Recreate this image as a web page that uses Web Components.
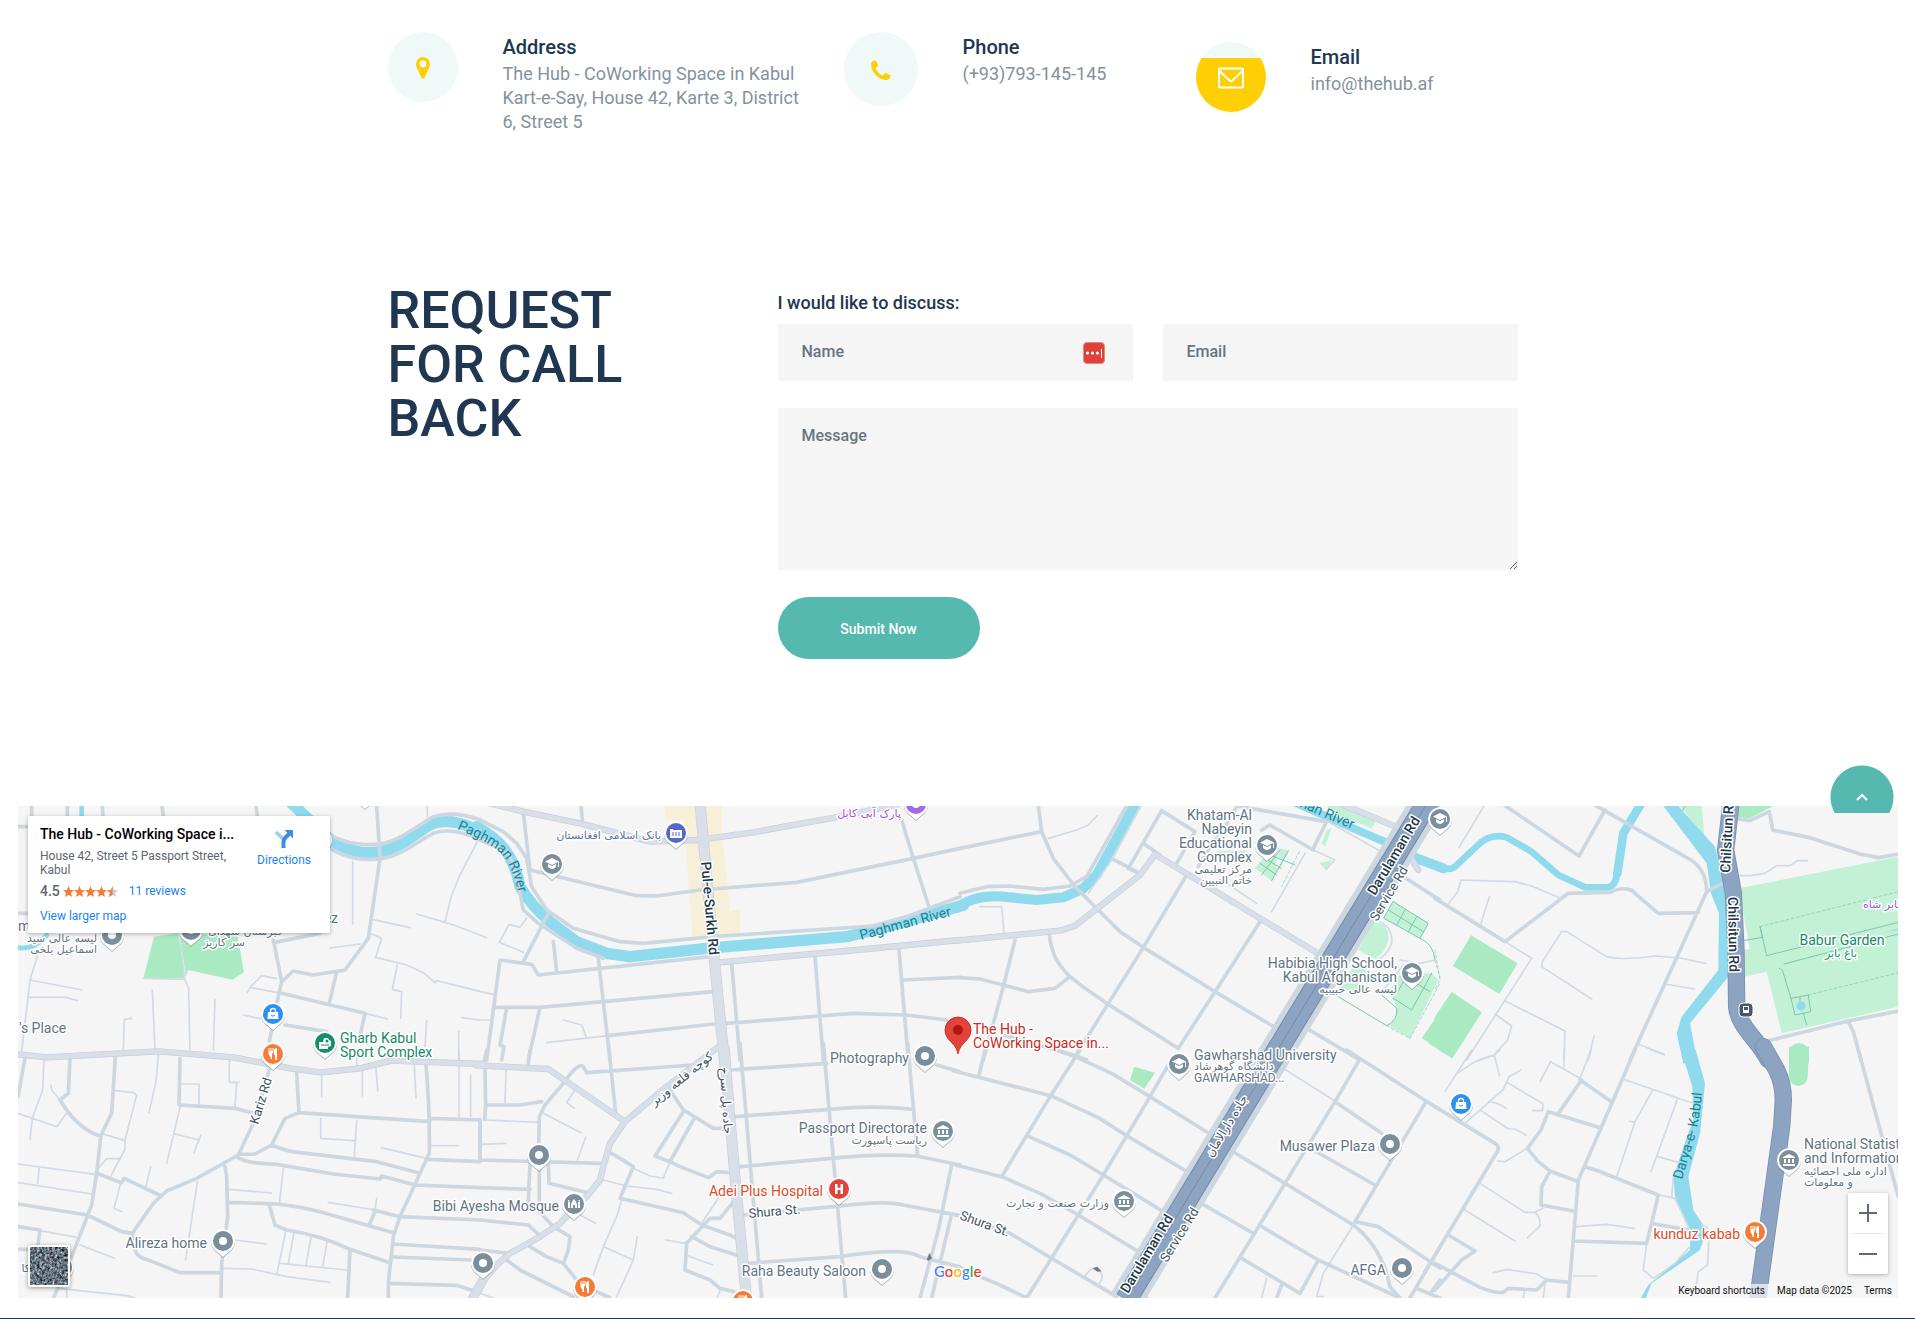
<!DOCTYPE html>
<html lang="en">
<head>
<meta charset="utf-8">
<meta name="viewport" content="width=device-width, initial-scale=1">
<title>Contact - The Hub</title>
<style>
body{margin:0;background:#fff;font-family:Roboto,"DejaVu Sans",sans-serif;color:#203751}
</style>
</head>
<body>
<contact-page></contact-page>
<script>
const define = (name, html, setup) => customElements.define(name, class extends HTMLElement {
  connectedCallback() {
    if (this.shadowRoot) return;
    const t = document.createElement('template');
    t.innerHTML = html;
    this.attachShadow({mode: 'open'}).append(t.content.cloneNode(true));
    if (setup) setup(this, this.shadowRoot);
  }
});

/* One contact detail: round icon, heading, text */
const contactIcons = {
  pin: '<svg width="14" height="22" viewBox="0 0 14 22"><path fill="#ffcf06" fill-rule="evenodd" d="M7 0a7 7 0 0 0-7 7c0 1.700.3 2.700.8 3.700L5.600 21a1.600 1.600 0 0 0 2.800 0l4.800-10.300c.5-1 .8-2 .8-3.700a7 7 0 0 0-7-7zM7 3.600a3.400 3.400 0 1 1 0 6.800 3.400 3.400 0 0 1 0-6.800z"/></svg>',
  phone: '<svg width="20" height="20" viewBox="0 0 20 20"><path fill="#ffcf06" d="M1.200 1.600 3.500.5c.9-.3 1.300 0 1.700.8l1.600 3.500c.3.700.1 1.100-.5 1.600L4.900 7.700c-.4.400-.4.800-.1 1.400 1.300 2.500 3.400 4.700 6.100 6.100.6.300 1 .3 1.400-.1l1.400-1.500c.5-.6.9-.7 1.600-.4l3.500 1.700c.8.400 1 .8.700 1.600-.8 2.300-2.300 3.500-4.600 3.400C7.500 19.600.4 12 .1 4.900 0 3.400.4 2.300 1.200 1.600z"/></svg>',
  mail: '<svg width="26" height="22" viewBox="0 0 26 22" fill="none" stroke="#fff" stroke-width="2"><rect x="1" y="1.500" width="24" height="19" rx="1.500"/><path d="m1.500 4 10.200 9.500q1.300 1.200 2.600 0L24.500 4"/></svg>'
};
define('contact-item', `
<style>
:host{display:flex;align-items:flex-start;gap:45px}
.disc{flex:none;width:70px;height:70px;border-radius:50%;background:#eff9f8;display:grid;place-items:center}
:host([icon=phone]) .disc{width:74px;height:74px}
:host([icon=mail]) .disc{background:linear-gradient(#eff9f8 16px,#ffcf06 16px)}
.disc svg{margin-top:2px}
.text{padding-top:3px}
h3{margin:0 0 3px;font-size:20px;line-height:24px;font-weight:500;color:#203751}
p{margin:0;font-size:18px;line-height:24px;color:#83929d}
</style>
<div class="disc"></div><div class="text"><h3><slot name="title"></slot></h3><p><slot></slot></p></div>`,
(el, root) => { root.querySelector('.disc').innerHTML = contactIcons[el.getAttribute('icon')]; });

define('callback-form', `
<style>
:host{display:block}
form{display:grid;grid-template-columns:1fr 1fr;gap:27px 30px}
.lead{grid-column:1/-1;font-size:18px;line-height:38px;font-weight:500;color:#203751;margin:0 0 -25px}
.field{position:relative;display:flex;min-width:0}
.wide{grid-column:1/-1}
input,textarea{box-sizing:border-box;width:100%;border:0;border-radius:0;background:#f5f5f5;padding:0 24px 2px;font:500 16px/24px Roboto,sans-serif;color:#203751}
input{height:57px}
textarea{height:162px;padding-top:16px;resize:vertical;display:block}
::placeholder{color:#67747e;opacity:1}
.key{position:absolute;right:28px;top:18px}
button{width:202px;height:62px;padding:2px 0 0;border:0;border-radius:31px;background:#56b9af;color:#fff;font:500 14px/24px Roboto,sans-serif}
</style>
<form>
<p class="lead">I would like to discuss:</p>
<div class="field"><input type="text" placeholder="Name" aria-label="Name">
<svg class="key" width="22" height="22" viewBox="0 0 22 22"><rect x=".5" y=".5" width="21" height="21" rx="3.500" fill="#df423b" stroke="#e58b78"/><g fill="#fff"><circle cx="4.500" cy="11" r="1.600"/><circle cx="9.500" cy="11" r="1.600"/><circle cx="14.500" cy="11" r="1.600"/><path d="M18 7h1v9h-1z"/></g></svg></div>
<div class="field"><input type="email" placeholder="Email" aria-label="Email"></div>
<div class="field wide"><textarea placeholder="Message" aria-label="Message"></textarea></div>
<div class="wide"><button type="button">Submit Now</button></div>
</form>`);

/* Place card shown over the map */
define('place-card', `
<style>
:host{display:flex;justify-content:space-between;box-sizing:border-box;width:302px;height:117px;padding:9px 16px 7px 12px;background:#fff;border-radius:2px;box-shadow:0 1px 4px rgba(0,0,0,.3);font-size:12px;line-height:14px;color:#5b6670}
h2{margin:0;font-size:14px;line-height:18px;font-weight:500;color:#000}
p{margin:6px 0 0;width:192px}
a{color:#1a83f5;text-decoration:none}
.rate{display:flex;align-items:center;gap:3px;margin-top:6px;line-height:16px}
b{font-size:14px;font-weight:500}
.rate a{margin-left:8px}
.more{display:block;margin-top:10px}
.dir{margin-top:5px;display:flex;flex-direction:column;align-items:center;gap:5px;align-self:flex-start;margin-right:3px}
</style>
<div><h2>The Hub - CoWorking Space i...</h2><p>House 42, Street 5 Passport Street, Kabul</p>
<div class="rate"><b>4.5</b><svg width="55" height="11" viewBox="0 0 55 11"><defs><path id="s" d="m5.500 0 1.600 3.900 4 .3-3.100 2.600 1 4.200-3.500-2.300L2 11l1-4.200L-.1 4.200l4-.3z"/><clipPath id="h"><path d="M44 0h5.500v11H44z"/></clipPath></defs><g fill="#f57c36"><use href="#s"/><use href="#s" x="11"/><use href="#s" x="22"/><use href="#s" x="33"/></g><use href="#s" x="44" fill="#c5ced5"/><g clip-path="url(#h)"><use href="#s" x="44" fill="#f57c36"/></g></svg><a href="#">11 reviews</a></div>
<a class="more" href="#">View larger map</a></div>
<a class="dir" href="#"><svg width="18" height="18" viewBox="0 0 18 18"><path fill="none" stroke="#a9cbe4" stroke-width="3.500" d="m1 2 6.500 6.500"/><path fill="none" stroke="#3f8ee4" stroke-width="4" d="M8.500 18v-6q0-2.500 2-4.500L14 4"/><path fill="#3f8ee4" d="M9.500 0H18v8.500z"/></svg>Directions</a>`);

/* Map geometry. Each sheet has its own origin and is drawn at three units per pixel. */
const sheets = [
{x:0,y:790,
 water:[[34,'M875,40 L960,120 C1000,165 1060,190 1110,188 C1180,188 1220,150 1280,110 C1320,85 1380,90 1450,130'],[14,'M54,473 C90,478 120,460 140,435'],[14,'M245,48V80']],
 dark:'M462,440 430,566 555,566 535,430ZM540,430 557,560 565,540 697,569 732,547 712,435Z',
 road:'M95,48V80M202,48V80M307,48L309,80M486,48L490,80M768,48L772,80M54,110H84M54,370H84M1130,48 L1140,205 1105,445 1035,540 940,555 880,543 845,575 830,640 808,755M820,450L845,575M820,458L960,430M845,610 1095,670 1080,740M1010,545 988,640M855,705 980,725M1000,140 C1050,165 1100,168 1150,160 C1200,150 1250,110 1300,80 C1350,65 1400,75 1440,90M990,175 C1050,210 1100,212 1150,205 C1210,195 1250,155 1300,130 C1350,112 1400,130 1440,150',
 minor:'M1058,215V402M1440,140 1380,255 1355,315 1335,395M1282,48V80M1115,388 1230,413M1250,372 1355,403 1440,435M990,474 1080,462M1115,432 1145,445 1127,502 1220,525 1270,548 1305,578 1310,572 1440,604M1192,525 1177,598 1205,605 1202,685M742,608 752,590 785,557 830,566M750,592 845,610M1095,670 1162,687M730,675 780,686M1280,692 1275,770M1385,683 1440,690M1376,725V810M113,495 90,570 65,785M90,570 246,600M85,622H198L232,632M395,685 373,688 370,780M457,600 465,780M645,628 640,780M540,440 553,565 566,595 570,790M432,565 553,568'},
{x:480,y:790,
 beige:'M555,48H725V120L750,360H780V432L637,440 612,90H555Z',
 water:[[34,'M-10,110 C60,150 100,190 120,290 C150,340 180,370 210,395 L290,455 380,490 450,500 680,475 1100,440 1200,415 1450,346']],
 road:'M0,90 70,125 110,160 140,205 155,290 200,360 280,415 420,455 490,460 700,440 1180,408 1280,380 1440,320M0,150 60,175 90,200 110,260 130,360 175,400 290,475 370,505M205,370 130,515M130,70 150,240 470,317 530,318 660,300 950,277 1300,205 1440,175M1265,90 1300,205 1345,345M303,48 307,90M60,510 155,523 175,555 690,500M60,510 20,810M45,652H180L700,605M355,505 390,810M220,455 230,545M180,652 145,810M80,655 60,765 72,770 65,810M385,737 700,702M740,700 1120,670 1280,675 1400,690M755,520 780,810M1005,500 1030,810M1257,480 1285,810M1270,570 1440,562',
 minor:'M140,385 120,412 87,403 58,457 130,487M0,435 20,443M0,604 40,613M0,690H30M250,690 305,705 318,740M200,758 385,737',
 art:'M30,40 130,65 300,100 510,155 650,150 690,145 820,127 1050,85 1250,45M720,517 1130,480 1440,450',
 main:'M660,40 700,480 735,830'},
{x:960,y:760,
 light:'M925,275 885,325 935,362 970,300ZM960,265 985,272 960,330 945,320ZM1100,138H1150L1250,180 1235,205 1120,160ZM1300,425 1405,490 1380,535 1272,475ZM1240,487 Q1290,490 1285,540 Q1275,580 1245,598 L1195,570ZM1290,690 1320,640 1415,640 1435,660 1350,835 1285,795 Q1315,780 1310,745ZM1135,680 1190,610 1230,640 1190,700ZM1100,210 1115,205 1095,260 1085,250ZM1078,310 1115,300 1100,333ZM770,272H860V285H770Z',
 dark:'M1440,755 1385,835 1440,868Z',
 line:'M900,310 950,345M915,295 963,325M960,270 905,345M985,272 935,362M930,285 1005,315M1300,425 1405,490 1380,535 1272,475ZM1335,450 1310,495M1370,470 1345,515M1285,450 1390,515M1380,535 Q1420,550 1425,600M1135,710 1280,797 Q1315,780 1310,745 L1265,705M1320,640 1410,695M1415,640 1355,750 1300,715M1345,640 1310,700',
 dash:'M1350,835 1440,670M1425,600 1440,650M1280,797 1350,835M1018,275 965,380',
 water:[[30,'M-10,444 C40,405 100,405 150,412 L230,420 310,412 370,385 410,345 530,125'],[24,'M1010,130 1180,205 1285,250'],[30,'M1365,293 1450,325']],
 road:'M235,138 245,215 280,295 345,380 415,450 480,515 550,562 765,695 950,805M1040,805 1200,900M0,265 245,215M0,400 80,380 150,378 250,388 330,378 380,350 500,138M605,152 505,325 530,337M460,298 530,335M605,152 705,215 650,310M550,250 600,285M680,345 550,562 345,890M900,485 765,695 655,865 440,730 375,685 330,650 C290,610 275,580 268,525M165,540 130,680 70,900M0,653 60,657 205,695 285,685 330,650M130,825 340,885 380,900M830,138 1100,185 1060,265M905,210 930,195 1060,270M1330,350 1440,420M830,140 790,210 750,260 715,320',
 minor:'M265,235 350,210 385,195 412,166M543,138 455,300 385,400M60,440H125L132,520M1035,280 935,455M1105,185 1255,270M800,370 890,430M1060,270 1125,300 1100,325M1250,480 Q1300,500 1295,550 Q1280,590 1250,600M1320,600 1380,610 1425,600M1270,690 1330,615',
 art:'M-10,542 300,512 345,497 540,345 585,283 900,475 1090,590M1150,135 1320,205M1350,290 1375,330'},
{x:1435,y:750,
 light:'M735,168H800L808,258ZM912,415 1390,320V770L1040,850 995,665 930,680 925,600 945,597 925,490Z',
 dark:'M910,168H1015L945,205 905,200ZM108,556 248,640 193,732 54,648ZM50,725 141,787 52,925 -20,880 0,800ZM1062,940V905a30,25 0 0 1 60,0V940Z',
 line:'M725,170 740,185 750,170M975,530 995,617 1390,517M925,572 983,562 975,530M1047,642 1390,552M1033,655 1042,660 1068,745 1120,735 1127,785 1080,795 1068,745M1105,790 1115,825M1095,740V755',
 dash:'M975,530 1390,425M1120,735 1390,668M0,600 15,690 0,720',
 water:[[20,'M-10,340 Q35,367 60,350 L140,275 Q175,250 215,262 L290,305 370,375 450,412H520Q545,405 545,370'],[26,'M547,370 565,250 620,158']],
 waterFill:'M685,168H730L840,290 875,420 880,680 765,820 788,940H745L725,850 740,800 850,660 852,490 828,430 815,340ZM1084,768a14,14 0 1 0 28,0a14,14 0 1 0-28,0ZM1335,550 1390,535V539Z',
 road:'M0,445 210,575 400,430 525,427 C560,410 590,415 600,430 L670,490 790,488M200,160 432,318 510,180M470,160 750,320 Q815,350 815,425 L905,378M815,425 585,930M900,205 945,212 1003,185 1013,240 1120,262 1275,312 1330,323 1390,312M1000,872 1230,815 1390,783M1240,815 1255,845 1278,930',
 minor:'M147,168 72,292M40,462 68,425 78,390 240,395 290,408 370,442M163,440 138,520M210,575 290,625 95,930M210,753 390,843 387,930M180,792 230,828 218,870 177,915 130,930M470,747 320,650 322,635 380,545 395,545 515,620 Q560,632 660,618 L735,624 812,640M690,702 778,717M610,883 688,913M477,858 460,930M900,377H945L990,370 1025,347H1065L1087,332H1117',
 high:'M889,150 872,300 895,430 903,600 905,770 C910,830 970,870 1000,930'},
{x:0,y:1050,
 road:'M75,25 54,140M210,25 205,130 180,150 Q230,235 300,258M346,20 335,190 303,255 290,370 275,465 215,620 160,744M290,370 365,398 372,385 478,435M54,462 262,495 365,545 397,550 460,460 500,423 590,385 715,315 760,220 808,60M397,550 405,600 Q415,625 440,628 L540,668H660M675,350 680,380 683,500 665,640 663,744M540,25 537,165 705,175 760,190M54,530 120,540 112,600M54,598H84M890,70 897,188 855,205 815,285 765,312 725,313M897,188 1290,215M1278,45 Q1290,180 1288,310 L1200,500 1180,560 1165,700V744M1290,205 1440,210M815,285 Q860,305 900,308 L1130,335 1255,368M710,320 Q730,340 830,343 L1000,372 1140,387 1145,378 1245,405 1440,413M1285,328 1440,335V210M685,457 835,462 Q900,470 960,485 L1180,548M808,465 825,525 860,540 Q960,555 1050,598 L1165,637M1050,598 1043,744M1120,480 1200,500 1440,510M1125,485 1110,520M1180,582 1440,598M1180,621 1415,630M1170,700 1370,706 1420,722',
 minor:'M132,25 128,120 97,205 90,268M54,190 170,230 200,190M153,105 155,120 180,150M348,122 400,128 410,135 375,270V298L333,377M303,250 375,272M290,360 320,326H357M54,342 285,373M118,350 113,400M54,398 275,432M475,15 468,95 447,188M545,102H597V165M540,172 500,340M525,252 597,270 603,255M597,270 582,308M688,30V97H717M710,97 705,172M965,75V140M1087,62V138M1128,55 1133,123M1243,45 1248,145M1377,0V200M1412,75V200M962,205V265L1063,272M1070,212 1063,320M1143,293 1280,325M1295,287H1375M850,355 838,460M685,418 815,429M592,395 557,630M452,350 438,408M362,400 342,475 365,485M120,542 230,562M240,585 343,625M985,457 1125,480 1130,445M705,570 800,582M858,540 830,675M882,548 865,640M934,556 918,645M982,572 968,650M840,640 1040,660M668,655 755,657 860,680 990,697M175,715 380,737 405,744M200,722V744M1070,20V45',
 art:'M44,12 140,22 475,4 700,22 870,55 965,67 1080,55 1175,32 1450,42M1450,680 1410,750'},
{x:480,y:1050,
 road:'M20,0 10,45M15,60 17,165 120,165 185,155M150,0 145,40M17,165 14,208M250,100 Q295,35 310,50 L320,68 640,45M250,100 195,165 178,200 176,300M0,208V330M385,-20 407,190M570,120 610,180 700,235H745M610,185 525,318 570,335 640,210M570,335 600,350 685,383 710,365 745,368M395,310 460,350 420,445 610,488 665,525 750,555 770,565M765,450 720,505H690L620,580 615,660 690,690 720,715 780,730M635,560 690,590 770,615M0,330 360,340M205,340 207,400 330,430M150,340 145,455M178,360V455M0,413 150,418M0,510 145,525 185,562M160,465 220,530 270,560 265,600 250,640 290,690M150,590 200,620 250,640M0,600 85,610M80,630 120,660 280,740M340,720 390,744M750,60 1040,40M765,200 1050,178 Q1180,165 1300,178M780,350 1055,325 Q1200,310 1310,318 L1440,345M790,495 1060,470 Q1220,450 1270,465 L1440,497M800,640 1080,620 Q1270,590 1320,620 L1440,650M780,-20 845,744M1030,-20 1060,325 1097,744M1283,-20 1313,318M1415,345 1375,540 1320,744M1413,500 1355,744M1370,45 1440,65',
 minor:'M78,60 75,160M17,210 175,217M5,283 78,280M190,190 303,248M317,262 292,330M285,120 260,158 283,175M460,355 510,378 550,384 570,335M370,390 440,408 530,418 575,430M425,450 410,500 370,590 340,675M370,590 460,630 410,740M472,560 460,630M300,495 347,520M557,570 615,580M625,618 697,644M715,445 665,520M720,720 712,744M0,730 40,744',
 art:'M-10,46 205,57 435,215M735,-25 560,110 435,215 390,280 370,350 360,390 320,440 240,520 180,560 90,610 50,645 20,680 -20,750',
 main:'M733,-5 745,150 765,380 800,754',
 arrow:'M1340,630 1348,608 1356,625 1346,632Z'},
{x:960,y:1050,
 dark:'M523,50 585,68 553,116 510,90Z',
 road:'M-20,62 272,137 415,203 500,257 685,367M75,0 57,75M290,0 345,20 455,70 570,140 755,255M360,0 272,137 125,380M625,45 570,140 430,375 200,744M200,257 330,315 430,375 610,485M-10,346 125,380 240,430 355,495 535,605M-10,495 150,550 275,625 470,740M-10,648 60,680 120,705 200,744M810,300 975,400 1180,525 Q1265,590 1290,710 L1320,744M1160,0 1440,180M1195,35 1125,155 975,400 765,744M1125,155 1265,250M1060,300 1245,405M1395,160 1185,515 1255,530 1440,655M715,455 880,550M905,530 1075,630 1320,744M845,625 1020,730 1075,630M965,705 950,744M1440,590 1350,744M1370,715 1440,744M1415,725 1440,690M545,738 560,744',
 minor:'M970,55 1120,150M1180,525 1090,670 1070,740H1090M920,685 905,744M375,680 Q390,650 415,655M420,665 Q435,680 415,705',
 arrow:'M398,655 412,650 425,664 412,665Z'},
{x:1435,y:1050,
 dark:'M1062,-10V80a28,28 0 0 0 56,0L1122,-10ZM10,0 68,-10 52,25Z',
 waterFill:'M738,0H782L810,100 795,250 760,380 775,480 815,540 795,600 650,700 630,750H614L640,705 765,600 765,540 720,440 715,380 760,250 775,210 772,110Z',
 road:'M0,170 180,280Q195,290 188,303L-30,665M0,640 135,712 Q180,730 205,727 L220,715 305,720 335,690 400,697M40,555 120,603 80,630 0,720M600,0 430,390 400,744M440,90 370,190M435,90 530,155M340,185 495,233M340,185 318,240 277,295 310,335 345,363 430,395M345,363 320,410 318,465 415,483M450,350 490,363 670,435 635,580 415,573M650,520 760,540M1270,0 1390,440',
 minor:'M110,0 30,125M70,68 120,35 178,15 193,77M178,15 195,0M387,0V50M315,95 347,35 435,85 468,0M258,60 222,80 205,118 90,220M218,98 325,162 322,182H293M160,155Q190,158 213,175M138,182 220,237H240L273,256M187,333 210,335 277,295M135,400 270,487H300Q320,505 313,530L278,563M323,475 300,487M90,480 240,573M565,88 770,158M653,120 600,215 545,380M727,148 648,365M583,213 600,218M668,320 730,337M425,530 515,523 598,535M635,580 625,660 655,685 720,640 765,590M672,435 720,445 765,540M715,380 710,440M800,525 Q825,530 822,560 L818,645 790,665 784,705M415,678H485M175,668 218,658 305,672 335,690M648,0 688,14M265,744 268,725M330,700 325,744',
 high:'M985,-10 1025,60 Q1045,100 1045,150 L1040,230 968,750'}
];

const glyphs = {
  dot: '<circle r="4"/>',
  grad: '<path d="m0-6 7 3.500L0 1-7-2.500zM-4 0v3q4 4 8 0V0L0 2zM6-2h1v5H6z"/>',
  bank: '<path d="M-6-3 0-6l6 3v1H-6zM-5-1h2v4h-2zM-1-1h2v4h-2zM3-1h2v4H3zM-6 4H6v2H-6z"/>',
  money: '<path d="M-6-4h3v1h9v8H-6z"/><path d="M-3-1v4M0-1v4M3-1v4" stroke="#5668cc"/>',
  food: '<path d="M-4.500-6h1v3h1v-3h1v3h1v-3h1v4l-1.500 2v5h-1.500V3L-4.500 0zM2 6V1H1v-4q0-3 3-3V6z"/>',
  bag: '<path d="M-5-2H5L5.500 5h-11z"/><path d="M-2.500-1v-2q0-2.500 2.500-2.500T2.500-3v2" fill="none" stroke="#fff" stroke-width="1.300"/><path d="M-2 1q2 2.500 4 0" fill="none" stroke="#2a90f2"/>',
  h: '<path d="M-4-5h2.500v3.800h3V-5H4V5H1.500V1h-3v4H-4z"/>',
  mosque: '<path d="M-6-2h2v6h-2zM4-2h2v6H4zM-3 0q1-3 3-5 2 2 3 5v4H1V1h-2v3h-2zM-6-4h1.500v1.500H-6zM4.500-4H6v1.500H4.500z"/>',
  sport: '<path d="M-6-1h4l1-4h4l1 2 2 1v5l-3 1v2h-9z"/><circle cx="2" cy="-2" r="1.500" fill="#149068"/><path d="M-4 2H4" stroke="#149068"/>',
  star: '<circle r="4"/>'
};
const G = '#7a8e9b';
const pins = [
 [676,833,'money','#5668cc'],[552,864,'grad',G],[916,804,'star','#a566ee'],[925,1056,'dot',G],
 [1267,845,'grad',G],[1440,819,'grad',G],[1412,973,'grad',G],[1179,1064,'grad',G],
 [1390,1144,'dot',G],[1402,1268,'dot',G],[1124,1201,'bank',G],[943,1131,'bank',G],
 [839,1189,'h','#e2443c'],[882,1269,'dot',G],[539,1155,'dot',G],[574,1204,'mosque',G],
 [483,1263,'dot',G],[585,1287,'food','#f57c36'],[743,1301,'food','#f57c36'],[223,1241,'dot',G],
 [62,1267,'dot',G],[273,1054,'food','#f57c36'],[273,1014,'bag','#2a90f2'],
 [325,1043,'sport','#149068'],[112,935,'dot',G],[191,930,'dot',G],[320,840,'dot',G],[365,793,'dot',G],
 [1461,1104,'bag','#2a90f2'],[1789,1160,'bank',G],[1755,1232,'food','#f57c36']
];
/* text, x, y, anchor (l, m, r), class, rotation */
const labels = [
 ['Khatam-Al',1252,820,'r'],['Nabeyin',1252,834,'r'],['Educational',1252,848,'r'],['Complex',1252,862,'r'],
 ['مرکز تعلیمی',1252,873,'r','fa'],['خاتم النبیین',1252,884,'r','fa'],
 ['Habibia High School,',1397,968,'r'],['Kabul Afghanistan',1397,982,'r'],['لیسه عالی حبیبیه',1397,993,'r','fa'],
 ['Gawharshad University',1194,1060,'l'],['دانشگاه گوهرشاد',1194,1070,'l','fa'],['GAWHARSHAD...',1194,1082,'l','sm'],
 ['Musawer Plaza',1375,1151,'r'],['AFGA',1386,1275,'r'],['وزارت صنعت و تجارت',1109,1207,'r','fa'],
 ['Photography',909,1063,'r'],['Passport Directorate',927,1133,'r'],['ریاست پاسپورت',927,1144,'r','fa'],
 ['Adei Plus Hospital',823,1196,'r','hot'],['Raha Beauty Saloon',866,1276,'r'],
 ['Bibi Ayesha Mosque',559,1211,'r'],['Alireza home',207,1248,'r'],['کا',30,1272,'r','fa'],
 ['Gharb Kabul',340,1043,'l','grn'],['Sport Complex',340,1057,'l','grn'],
 ["'s Place",19,1033,'l'],['m',18,931,'l'],['ez',338,923,'r'],
 ['لیسه عالی سید',97,942,'r','fa'],['اسماعیل بلخی',97,953,'r','fa'],['قبرستان شهدای',282,935,'r','fa'],['سر کاریز',245,946,'r','fa'],
 ['بانک اسلامی افغانستان',661,839,'r','fa slate'],['پارک آبی کابل',901,817,'r','fa pur'],
 ['Babur Garden',1842,945,'m','grn'],['باغ بابر',1841,957,'m','fa grn'],['بابر شاه',1863,908,'l','fa pur'],
 ['National Statistics',1804,1149,'l'],['and Information',1804,1163,'l'],['اداره ملی احصائیه',1804,1175,'l','fa'],['و معلومات',1804,1186,'l','fa'],
 ['kunduz kabab',1740,1239,'r','hot'],
 ['The Hub -',973,1034,'l','red'],['CoWorking Space in...',973,1048,'l','red'],
 ['Shura St.',749,1218,'l','st',-5],['Shura St.',959,1219,'l','st',20],
 ['Pul-e-Surkh Rd',701,862,'l','hw',85],['Kariz Rd',258,1125,'l','st',-73],
 ['Darulaman Rd',1375,896,'l','hw',-59],['Service Rd',1377,922,'l','st',-59],
 ['Darulaman Rd',1128,1294,'l','hw',-59],['Service Rd',1167,1263,'l','st',-58],
 ['Chilsitun Rd',1730,873,'l','hw',-87],['Chilsitun Rd',1728,897,'l','hw',89],
 ['جاده دارالامان',1230,1128,'m','fb',-59],['کوچه قلعه وزیر',684,1082,'m','fb',-39],['جاده پل سرخ',722,1101,'m','fb',86],
 ['Paghman River',861,940,'l','riv',-15],['Paghman River',1352,829,'r','riv',23]
];

define('area-map', `
<style>
:host{display:block;position:relative;height:492px;background:#f5f5f5}
.canvas{display:block;width:100%;height:100%}
place-card{position:absolute;left:10px;top:10px}
.sat{position:absolute;left:10px;bottom:11px;box-sizing:border-box;width:42px;height:42px;padding:0;border:2px solid #fff;border-radius:2px;overflow:hidden;background:#68777f;box-shadow:0 1px 4px rgba(0,0,0,.4)}
.sat svg{display:block}
.zoom{position:absolute;right:10px;bottom:24px;width:40px;background:#fff;border-radius:2px;box-shadow:0 1px 4px rgba(0,0,0,.3)}
.zoom button{display:grid;place-items:center;width:100%;height:40px;border:0;padding:0;background:none}
.zoom hr{margin:0 5px;border:0;height:1px;background:#e3e5e7}
.legal{position:absolute;right:0;bottom:0;display:flex;gap:12px;padding:0 6px;line-height:14px;font-size:10px;color:#111;background:rgba(245,245,245,.75)}
.legal a,.legal button{color:inherit;text-decoration:none;border:0;background:none;padding:0;font:inherit}
text{font:14px Roboto,"DejaVu Sans",sans-serif;fill:#5f7484;stroke:#fff;stroke-width:3px;stroke-linejoin:round;paint-order:stroke}
.sm{font-size:12px}.fa{font:11px "DejaVu Sans",sans-serif}.fb{font:12px "DejaVu Sans",sans-serif;fill:#40535f}
.grn{fill:#188a68}.red{fill:#c82a22}.hot{fill:#df4a28}.pur{fill:#9a55e0}.slate{fill:#60779c}
.st{fill:#3f5564;font-size:13px}.hw{fill:#22384a;font-weight:500}.riv{fill:#1c8192;stroke:none}
.goog{font:600 15px Lato,sans-serif;stroke-width:3px}
</style>
<svg class="canvas" viewBox="18 806 1880 492" preserveAspectRatio="xMinYMin slice" role="img" aria-label="Map"></svg>
<place-card></place-card>
<button class="sat" type="button" aria-label="Show satellite imagery"><svg width="38" height="38"><filter id="n" x="0" y="0" width="1" height="1" color-interpolation-filters="sRGB"><feTurbulence type="fractalNoise" baseFrequency=".4" numOctaves="3" seed="4"/><feColorMatrix values="1.300 .3 0 0 -.4  1 .6 0 0 -.35  .9 .7 0 0 -.31  0 0 0 0 1"/></filter><rect width="38" height="38" filter="url(#n)"/></svg></button>
<div class="zoom"><button type="button" aria-label="Zoom in"><svg width="18" height="18" stroke="#5d6b76" stroke-width="2"><path d="M9 0v18M0 9h18"/></svg></button><hr><button type="button" aria-label="Zoom out"><svg width="18" height="18" stroke="#5d6b76" stroke-width="2"><path d="M0 9h18"/></svg></button></div>
<div class="legal"><button type="button">Keyboard shortcuts</button><span>Map data ©2025</span><a href="#">Terms</a></div>`,
(el, root) => {
  const layer = fn => sheets.map(s => `<g transform="translate(${s.x} ${s.y}) scale(.33333)">${fn(s)}</g>`).join('');
  const line = (d, c, w, extra = '') => d ? `<path d="${d}" fill="none" stroke="${c}" stroke-width="${w}" stroke-linejoin="round" stroke-linecap="round" ${extra}/>` : '';
  const fill = (d, c) => d ? `<path d="${d}" fill="${c}"/>` : '';
  const dar = (c, w) => `<path d="M1429 800 1126 1300" fill="none" stroke="${c}" stroke-width="${w}"/>`;
  let out = layer(s => fill(s.beige, '#f8efd8') + fill(s.light, '#c3f1d6') + fill(s.dark, '#a9eac2') + line(s.line, '#78c8ac', 3) + line(s.dash, '#78c8ac', 2, 'stroke-dasharray="9 7"'));
  out += layer(s => (s.water || []).map(([w, d]) => line(d, '#90daee', w)).join('') + fill(s.waterFill, '#90daee'));
  out += layer(s => line(s.minor, '#d1dae4', 5));
  out += layer(s => line(s.road, '#cdd7df', 11));
  out += layer(s => line(s.art, '#c6ced9', 19) + line(s.main, '#c6ced9', 33));
  out += layer(s => line(s.art, '#d9dfe9', 15) + line(s.main, '#d9dfe9', 29));
  out += dar('#cdd7df', 33) + dar('#728bab', 22) + dar('#8ca3c2', 20) + dar('#7389a5', 1);
  out += layer(s => line(s.high, '#7890ae', 52) + line(s.high, '#8ca3c2', 47) + fill(s.arrow, '#6e7f8b'));
  out += '<g><rect x="1739" y="1003" width="14" height="14" rx="4" fill="#465868" stroke="#fff"/><path d="M1743 1006h6v7h-6z" fill="#fff"/><path d="M1744 1007h4v3h-4z" fill="#465868"/></g>';
  const anchor = {l: 'start', m: 'middle', r: 'end'};
  /* A right-to-left run starts at its right edge */
  const rtlAnchor = {l: 'end', m: 'middle', r: 'start'};
  for (const [t, x, y, a, c = '', r] of labels) {
    const rtl = /[\u0600-\u06ff]/.test(t);
    out += `<text x="${x}" y="${y}" class="${c}" ${rtl ? 'direction="rtl"' : ''} text-anchor="${(rtl ? rtlAnchor : anchor)[a]}" ${r ? `transform="rotate(${r} ${x} ${y})"` : ''}>${t}</text>`;
  }
  out += '<path id="pr" fill="none" d="M457 829C478 838 502 848 509 865 515 877 518 888 523 920"/><text class="riv"><textPath href="#pr">Paghman River</textPath></text>';
  out += '<path id="dk" fill="none" d="M1682 1180C1690 1150 1702 1130 1703 1070"/><text class="riv"><textPath href="#dk">Darya-e- Kabul</textPath></text>';
  for (const [x, y, g, c] of pins) {
    const tear = 'M0 16Q-1 15-7 10A12 12 0 1 1 7 10Q1 15 0 16Z';
    out += `<g transform="translate(${x} ${y})"><path d="${tear}" transform="translate(0 1)" fill="#5a6a76" opacity=".5"/><path d="${tear}" fill="#fff"/><circle r="10" fill="${c}"/><g fill="#fff">${glyphs[g]}</g></g>`;
  }
  out += '<g transform="translate(958 1030)"><path d="M0 24C-2 12-13 11-13 0A13 13 0 0 1 13 0C13 11 2 12 0 24Z" fill="#e2443c" stroke="#b9231c" stroke-width=".8"/><circle r="5" fill="#b1160f"/></g>';
  out += '<text class="goog" x="934" y="1277"><tspan fill="#4285f4">G</tspan><tspan fill="#ea4335">o</tspan><tspan fill="#fbbc05">o</tspan><tspan fill="#4285f4">g</tspan><tspan fill="#34a853">l</tspan><tspan fill="#ea4335">e</tspan></text>';
  root.querySelector('.canvas').innerHTML = out;
});

define('contact-page', `
<style>
:host{display:block}
.wrap{box-sizing:border-box;max-width:1140px;margin:0 auto}
.details{display:grid;grid-template-columns:426px 322px 1fr;column-gap:30px;padding-top:32px}
.details [icon=mail]{margin-top:10px}
.call{display:grid;grid-template-columns:260px 1fr;column-gap:130px;padding:150px 10px 147px 0}
h1{margin:0;font-size:52px;line-height:54px;font-weight:500;color:#203751;text-transform:uppercase}
.mapbox{position:relative;margin:0 17px 20px 18px}
.top{position:absolute;right:4px;top:-41px;width:64px;height:48px;padding:16px 0 0;border:0;overflow:hidden;border-radius:0;background:radial-gradient(circle at 32px 32px,#56b9af 31px,transparent 32px);display:flex;justify-content:center;align-items:flex-start}
.top svg{margin-top:12px}
footer{height:1px;background:#1d3755}
</style>
<main>
<section class="wrap details">
<contact-item icon="pin"><span slot="title">Address</span>The Hub - CoWorking Space in Kabul Kart-e-Say, House 42, Karte 3, District 6, Street 5</contact-item>
<contact-item icon="phone"><span slot="title">Phone</span>(+93)793-145-145</contact-item>
<contact-item icon="mail"><span slot="title">Email</span>info@thehub.af</contact-item>
</section>
<section class="wrap call"><h1>Request for call back</h1><callback-form></callback-form></section>
<section class="mapbox"><area-map></area-map>
<button class="top" type="button" aria-label="Back to top"><svg width="12" height="8" viewBox="0 0 12 8" fill="none" stroke="#fff" stroke-width="2"><path d="m1 7 5-5 5 5"/></svg></button></section>
</main>
<footer></footer>`);
</script>
</body>
</html>
